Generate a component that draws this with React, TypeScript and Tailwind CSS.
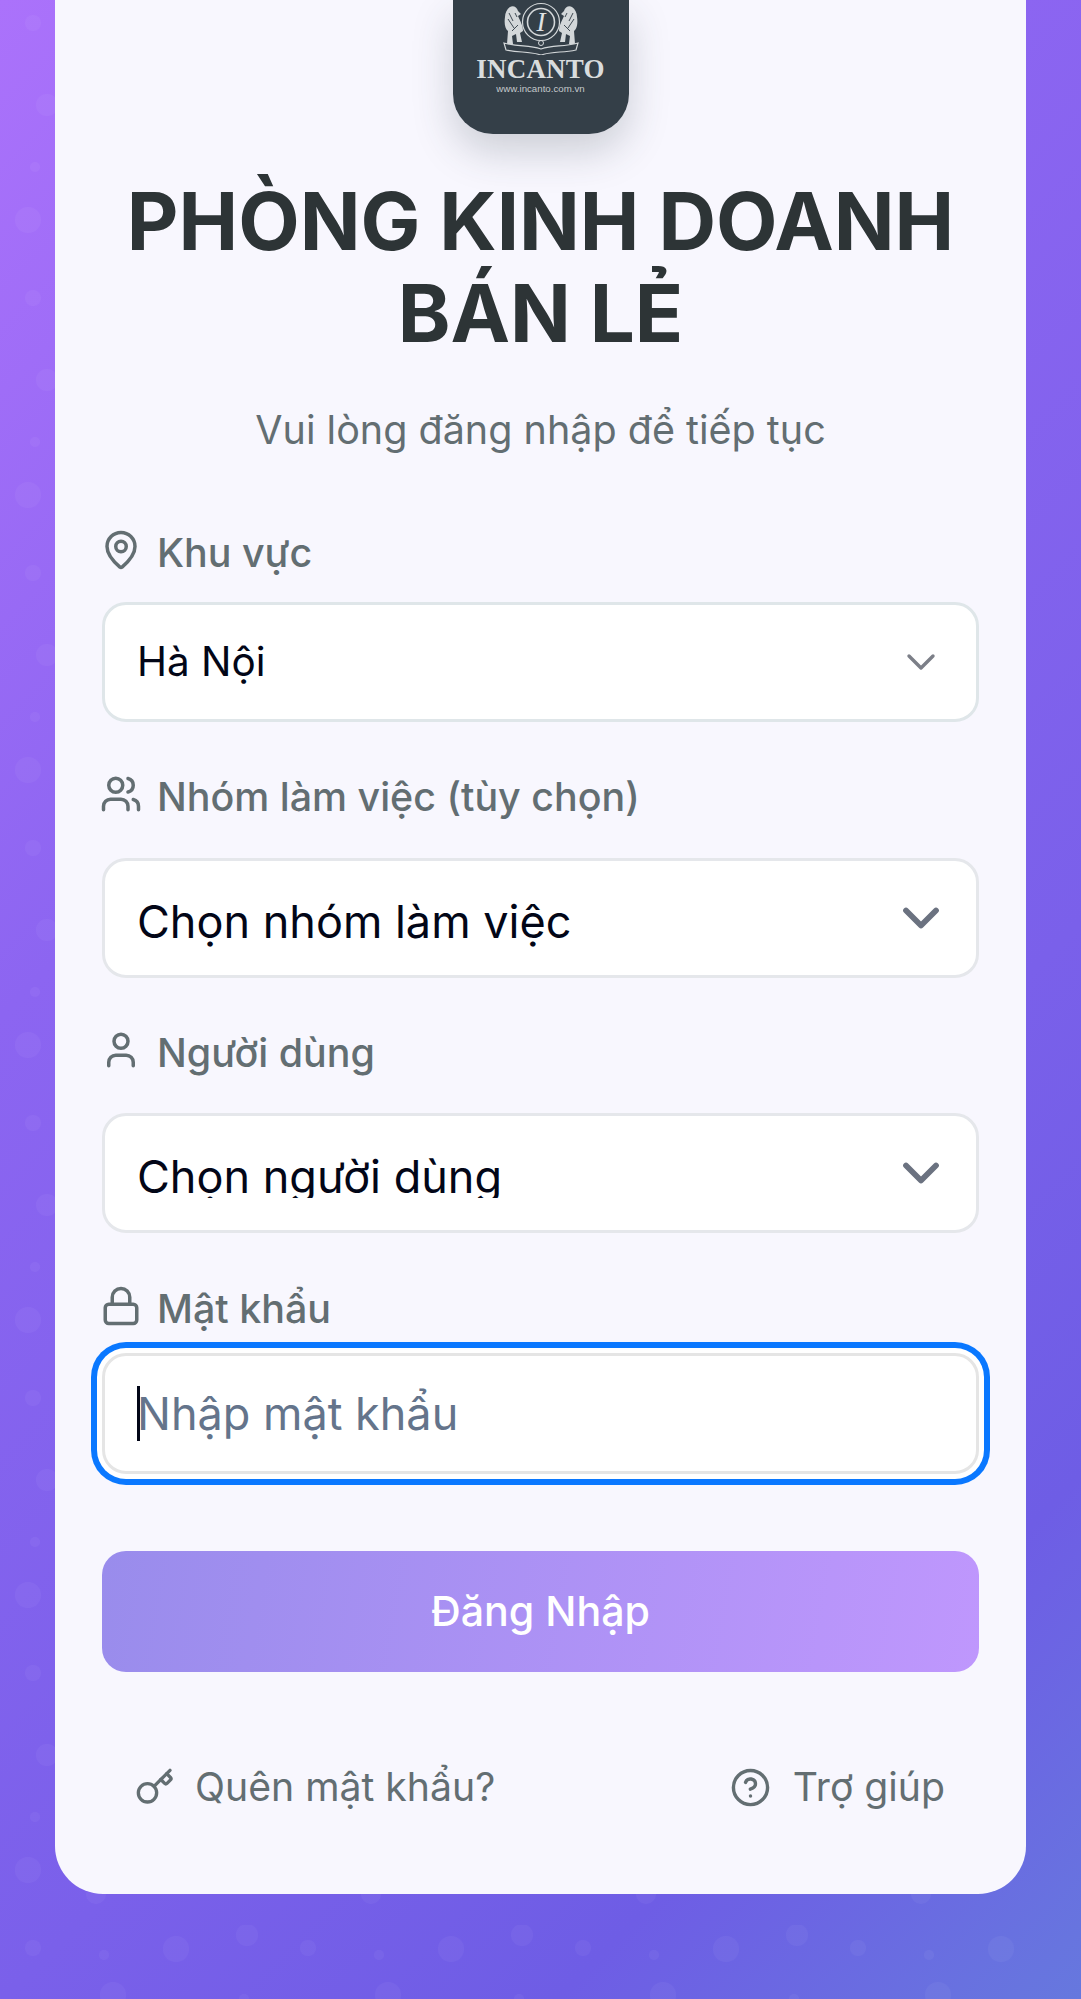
import React from 'react';
import { MapPin, Users, User, Lock, Key, CircleHelp, ChevronDown } from 'lucide-react';

const bubbles = [
  { x: 47, y: 105, r: 11 },
  { x: 35, y: 167, r: 5 },
  { x: 28, y: 220, r: 13 },
  { x: 33, y: 23, r: 8 },
  { x: 176, y: 24, r: 13 },
  { x: 247, y: 10, r: 11 },
  { x: 104, y: 30, r: 5 },
  { x: 113, y: 70, r: 13 },
  { x: 96, y: 244, r: 10 },
  { x: 244, y: 74, r: 5 },
];

const Crest = () => (
  <svg width="90" height="54" viewBox="0 0 90 54" className="block">
    <defs>
      <g id="lion">
        <path
          d="M14 6C17 4 21 6 22 10L25 13L22 15C24 20 27 24 27 30L24 32L26 41L21 41L20 33L16 35L17 43L11 43L12 30C9 28 8 22 9 16C9 12 11 8 14 6Z"
          fill="#d3d7d9"
        />
        <path d="M13 12L17 20M12 18L18 27M16 30L22 24M19 12L21 16" stroke="#3f4a53" strokeWidth="1" fill="none" />
      </g>
    </defs>
    <use href="#lion" />
    <use href="#lion" transform="translate(90 0) scale(-1 1)" />
    <circle cx="45" cy="21" r="18.5" fill="#343f48" stroke="#d3d7d9" strokeWidth="1.2" />
    <circle cx="45" cy="21" r="13.5" fill="none" stroke="#d3d7d9" strokeWidth="1.6" />
    <text x="45" y="30" textAnchor="middle" fontFamily="'Liberation Serif', serif" fontStyle="italic" fontSize="27" fill="#e0e3e4">
      I
    </text>
    <path d="M8 42C24 46 32 44 45 48C58 44 66 46 82 42L80 49C66 52 58 50 45 54C32 50 24 52 10 49Z" fill="#343f48" stroke="#d3d7d9" strokeWidth="1.2" />
    <circle cx="45" cy="42" r="2.5" fill="none" stroke="#d3d7d9" strokeWidth="1" />
  </svg>
);

const Logo = () => (
  <div className="mx-auto flex h-[134px] w-[176px] flex-col items-center rounded-b-[40px] bg-[#343f48] pt-[1px] shadow-[0_18px_40px_rgba(52,63,72,0.22)]">
    <Crest />
    <div className="font-['Liberation_Serif',serif] text-[27px] leading-[28px] font-bold tracking-[0.2px] text-[#d9dcdd]">
      INCANTO
    </div>
    <div className="font-['Liberation_Sans',sans-serif] text-[9.7px] leading-[12px] text-[#c5cacc]">
      www.incanto.com.vn
    </div>
  </div>
);

type LabelProps = {
  icon: React.ReactNode;
  text: string;
  className: string;
};

const FieldLabel = ({ icon, text, className }: LabelProps) => (
  <div className={`flex h-[50px] items-center text-[39.4px] font-medium text-[#636e72] ${className}`}>
    <span className="mb-[9px] -ml-[2px] flex w-[57px] shrink-0">{icon}</span>
    <span>{text}</span>
  </div>
);

export default function App() {
  return (
    <div className="relative h-[1999px] w-full overflow-hidden bg-[linear-gradient(135deg,#ab72fb_0%,#8c65f1_33%,#7a60ea_65%,#6e5de5_83%,#6678de_100%)] font-['Inter',sans-serif]">
      <svg className="absolute top-0 left-0 h-full w-[1040px]" aria-hidden="true">
        <defs>
          <pattern id="dots" width="275" height="275" patternUnits="userSpaceOnUse">
            {bubbles.map((b, i) => (
              <circle key={i} cx={b.x} cy={b.y} r={b.r} fill="#ffffff" fillOpacity="0.04" />
            ))}
          </pattern>
        </defs>
        <rect width="100%" height="100%" fill="url(#dots)" />
      </svg>

      <main className="relative ml-[55px] h-[1894px] w-[971px] rounded-b-[48px] bg-[#f8f7fe] px-[47px]">
        <Logo />

        <h1 className="mt-[41px] text-center text-[79.8px] leading-[92px] font-bold text-[#2d3436]">
          PHÒNG KINH DOANH
          <br />
          BÁN LẺ
        </h1>
        <p className="mt-[46px] text-center text-[39.5px] leading-[50px] text-[#636e72]">
          Vui lòng đăng nhập để tiếp tục
        </p>

        <FieldLabel className="mt-[74px] mb-[23px]" icon={<MapPin size={42} strokeWidth={2} />} text="Khu vực" />
        <div className="flex h-[120px] items-center justify-between rounded-[24px] border-[3px] border-[#dfe6e9] bg-white pr-[31px] pl-[32px] text-[40.4px] text-[#020617]">
          <span>Hà Nội</span>
          <ChevronDown size={48} strokeWidth={1.7} className="text-[#7c7f88]" />
        </div>

        <FieldLabel className="mt-[51px] mb-[35px]" icon={<Users size={42} strokeWidth={2} />} text="Nhóm làm việc (tùy chọn)" />
        <div className="flex h-[120px] items-center justify-between rounded-[24px] border-[3px] border-[#e5e7eb] bg-white pr-[25px] pl-[32px] text-[45px] text-[#020617]">
          <span className="mt-[7px]">Chọn nhóm làm việc</span>
          <ChevronDown size={60} strokeWidth={2.3} className="text-[#6b7280]" />
        </div>

        <FieldLabel className="mt-[51px] mb-[34px]" icon={<User size={42} strokeWidth={2} />} text="Người dùng" />
        <div className="flex h-[120px] items-center justify-between rounded-[24px] border-[3px] border-[#e5e7eb] bg-white pr-[25px] pl-[32px] text-[45px] text-[#020617]">
          <span className="mt-[7px] block h-[43px] overflow-hidden leading-[43px]">Chọn người dùng</span>
          <ChevronDown size={60} strokeWidth={2.3} className="text-[#6b7280]" />
        </div>

        <FieldLabel className="mt-[52px] mb-[18px]" icon={<Lock size={42} strokeWidth={2} />} text="Mật khẩu" />
        <div className="flex h-[121px] items-center rounded-[24px] border-[3px] border-[#e5e5e5] bg-white pl-[32px] text-[45px] text-[#64748b] shadow-[0_0_0_5px_#ffffff,0_0_0_11px_#0a78ff]">
          <span className="mr-[-3px] h-[55px] w-[3px] bg-[#020617]" />
          <span>Nhập mật khẩu</span>
        </div>

        <button className="mt-[77px] flex h-[121px] w-full items-center justify-center rounded-[24px] bg-[linear-gradient(100deg,#998cec_0%,#bf97fd_100%)] text-[41.2px] font-medium text-white">
          Đăng Nhập
        </button>

        <div className="mt-[86px] flex items-center justify-between pr-[34px] pl-[33px] text-[39.2px] text-[#636e72]">
          <a href="#" className="flex items-center gap-[20px]">
            <Key size={40} strokeWidth={2} />
            <span>Quên mật khẩu?</span>
          </a>
          <a href="#" className="flex items-center gap-[22px]">
            <CircleHelp size={41} strokeWidth={2} />
            <span>Trợ giúp</span>
          </a>
        </div>
      </main>
    </div>
  );
}
